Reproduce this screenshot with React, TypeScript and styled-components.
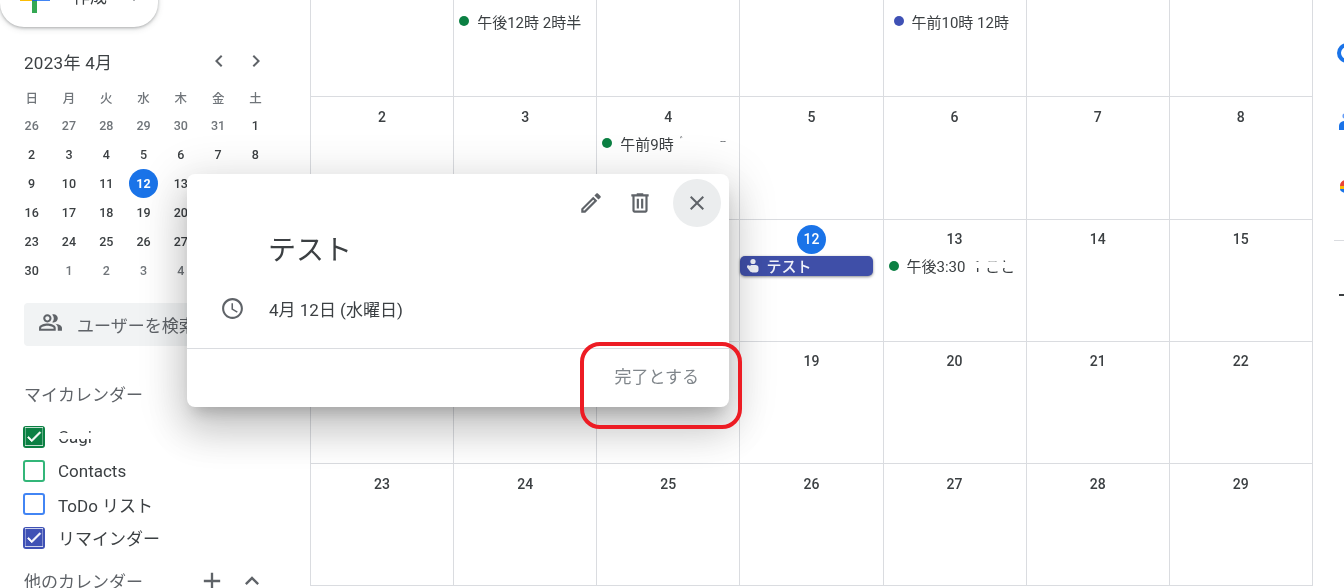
import React from 'react';
import styled, { createGlobalStyle } from 'styled-components';
import {
  MdAdd,
  MdChevronLeft,
  MdChevronRight,
  MdClose,
  MdExpandLess,
  MdOutlineAccessTime,
  MdOutlineEdit,
  MdOutlinePeopleAlt,
  MdCheck,
} from 'react-icons/md';

const GlobalStyle = createGlobalStyle`
  html, body {
    margin: 0;
    padding: 0;
    height: 588px;
    overflow: hidden;
    background: #fff;
    font-family: Roboto, "Noto Sans CJK JP", sans-serif;
    color: #3c4043;
  }
`;

const Page = styled.div`
  position: relative;
  display: flex;
  width: 1344px;
  height: 588px;
  overflow: hidden;
  background: #fff;
  filter: blur(0.3px);
`;

const Sidebar = styled.aside`
  flex: 0 0 310px;
  display: flex;
  flex-direction: column;
  align-items: flex-start;
  > * {
    flex-shrink: 0;
  }
`;

const Compose = styled.div`
  display: flex;
  align-items: center;
  box-sizing: border-box;
  width: 158px;
  height: 48px;
  margin-top: -21px;
  padding-left: 16px;
  border-radius: 0 0 24px 24px;
  background: #fff;
  box-shadow: 0 1px 3px rgba(60, 64, 67, 0.35), 0 2px 6px rgba(60, 64, 67, 0.15);
  font-size: 17px;
  color: #3c4043;
`;

const ComposeLabel = styled.span`
  margin-left: 21px;
  position: relative;
  top: -8px;
`;

const ComposeCaret = styled.span`
  width: 0;
  height: 0;
  margin: 0 0 0 23px;
  position: relative;
  top: -4px;
  border-left: 4px solid transparent;
  border-right: 4px solid transparent;
  border-top: 4px solid #5f6368;
`;

const MiniHeader = styled.div`
  display: flex;
  align-items: center;
  box-sizing: border-box;
  width: 100%;
  height: 24px;
  margin-top: 22px;
  padding: 0 42px 0 24px;
  font-size: 17px;
  letter-spacing: 0.3px;
  color: #3c4043;
`;

const MiniTitle = styled.span`
  flex: 1;
`;

const MiniNav = styled.div`
  display: flex;
  gap: 13px;
  font-size: 24px;
  color: #5f6368;
  svg {
    display: block;
  }
`;

const MiniGrid = styled.div`
  display: grid;
  grid-template-columns: repeat(7, 37.3px);
  grid-template-rows: 27px repeat(6, 29px);
  margin: 11px 0 0 13px;
`;

const MiniDay = styled.div<{ $muted?: boolean; $head?: boolean; $today?: boolean }>`
  display: flex;
  align-items: center;
  justify-content: center;
  font-size: 12.5px;
  font-weight: ${(p) => (p.$today ? 700 : 500)};
  color: ${(p) => (p.$today ? '#fff' : p.$head || p.$muted ? '#70757a' : '#3c4043')};
  span {
    display: flex;
    align-items: center;
    justify-content: center;
    width: 29px;
    height: 29px;
    border-radius: 50%;
    background: ${(p) => (p.$today ? '#1a73e8' : 'transparent')};
  }
`;

const Search = styled.div`
  display: flex;
  align-items: center;
  box-sizing: border-box;
  width: 262px;
  height: 43px;
  margin: 18px 0 0 24px;
  padding-left: 14px;
  border-radius: 4px;
  background: #f1f3f4;
  font-size: 17px;
  color: #5f6368;
  white-space: nowrap;
  svg {
    font-size: 25px;
    margin-right: 14px;
    position: relative;
    top: -2px;
  }
`;

const SectionHead = styled.div<{ $gap: number }>`
  display: flex;
  align-items: center;
  box-sizing: border-box;
  width: 100%;
  height: 24px;
  margin-top: ${(p) => p.$gap}px;
  padding: 0 44px 0 24px;
  font-size: 17px;
  color: #5f6368;
`;

const SectionTitle = styled.span`
  flex: 1;
`;

const SectionTools = styled.div`
  display: flex;
  gap: 12px;
  color: #5f6368;
  font-size: 28px;
  svg {
    display: block;
  }
`;

const CalendarList = styled.div`
  display: flex;
  flex-direction: column;
  margin-top: 15px;
`;

const CalendarRow = styled.div`
  display: flex;
  align-items: center;
  height: 33.7px;
  padding-left: 23px;
  font-size: 17px;
  color: #3c4043;
`;

const Check = styled.span<{ $color: string; $on?: boolean }>`
  display: flex;
  align-items: center;
  justify-content: center;
  box-sizing: border-box;
  width: 22px;
  height: 22px;
  margin-right: 13px;
  border: 2px solid ${(p) => p.$color};
  border-radius: 3px;
  background: ${(p) => (p.$on ? p.$color : '#fff')};
  color: #fff;
  font-size: 21px;
  svg {
    stroke: #fff;
    stroke-width: 1px;
  }
`;

const Fragmented = styled.span`
  -webkit-mask-image: linear-gradient(#000 0 32%, transparent 32% 62%, #000 62% 100%);
  mask-image: linear-gradient(#000 0 32%, transparent 32% 62%, #000 62% 100%);
`;

const Month = styled.main`
  flex: 0 0 auto;
  display: grid;
  grid-template-columns: repeat(7, 143.14px);
  grid-template-rows: repeat(5, 122.25px);
  height: 611px;
  margin-top: -25px;
  border-right: 1px solid #dadce0;
`;

const Cell = styled.div`
  display: flex;
  flex-direction: column;
  min-width: 0;
  border-left: 1px solid #dadce0;
  border-bottom: 1px solid #dadce0;
  background: #fff;
`;

const DateLabel = styled.div<{ $today?: boolean; $top?: boolean }>`
  display: flex;
  align-items: center;
  justify-content: center;
  align-self: center;
  width: ${(p) => (p.$today ? '29px' : 'auto')};
  height: 29px;
  margin-top: ${(p) => (p.$top ? '2px' : '5px')};
  margin-bottom: ${(p) => (p.$top ? '3px' : '0')};
  border-radius: 50%;
  background: ${(p) => (p.$today ? '#1a73e8' : 'transparent')};
  color: ${(p) => (p.$today ? '#fff' : '#3c4043')};
  font-size: 14px;
  font-weight: 500;
`;

const DotEvent = styled.div<{ $indent?: number }>`
  display: flex;
  align-items: center;
  height: 20px;
  margin-top: 2px;
  padding-left: ${(p) => 5 + (p.$indent ?? 0)}px;
  font-size: 15px;
  color: #3c4043;
  white-space: nowrap;
`;

const Dot = styled.span<{ $color: string }>`
  flex: 0 0 auto;
  width: 10px;
  height: 10px;
  margin-right: 8px;
  border-radius: 50%;
  background: ${(p) => p.$color};
`;

const Patch = styled.span`
  display: flex;
  align-items: flex-start;
  justify-content: space-between;
  box-sizing: border-box;
  width: 57px;
  height: 19px;
  margin-left: 5px;
  padding: 0 10px 0 1px;
  background: #fff;
  font-size: 10px;
  line-height: 16px;
  color: #5f6368;
`;

const Chip = styled.div`
  display: flex;
  align-items: center;
  height: 20px;
  margin: 2px 10px 0 0;
  padding-left: 5px;
  border-radius: 5px;
  background: #3f4fa8;
  box-shadow: 0 1px 3px rgba(60, 64, 67, 0.6);
  color: #f1f3f9;
  font-size: 15px;
  font-weight: 500;
  svg {
    margin-right: 6px;
  }
`;

const Rail = styled.aside`
  flex: 1;
  display: flex;
  flex-direction: column;
  min-width: 0;
  overflow: hidden;
  padding-top: 43px;
`;

const RailIcon = styled.svg<{ $gap: number }>`
  display: block;
  flex: 0 0 auto;
  margin: ${(p) => p.$gap}px 0 0 24px;
`;

const RailLine = styled.div`
  flex: 0 0 auto;
  height: 1px;
  margin: 45px 0 0 21px;
  background: #dadce0;
`;

const RailPlus = styled.div`
  flex: 0 0 auto;
  width: 12px;
  height: 2px;
  margin: 53px 0 0 26px;
  background: #3c4043;
`;

const Popup = styled.section`
  position: absolute;
  left: 187px;
  top: 174px;
  display: flex;
  flex-direction: column;
  width: 542px;
  height: 233px;
  border-radius: 8px;
  background: #fff;
  box-shadow: 0 24px 38px 3px rgba(0, 0, 0, 0.14), 0 9px 46px 8px rgba(0, 0, 0, 0.12),
    0 11px 15px -7px rgba(0, 0, 0, 0.2);
  > * {
    flex-shrink: 0;
  }
`;

const PopupTools = styled.div`
  display: flex;
  align-items: center;
  justify-content: flex-end;
  padding: 5px 8px 0 0;
`;

const ToolButton = styled.div<{ $active?: boolean }>`
  display: flex;
  align-items: center;
  justify-content: center;
  width: 48px;
  height: 48px;
  margin-left: ${(p) => (p.$active ? '9px' : '1px')};
  border-radius: 50%;
  background: ${(p) => (p.$active ? '#ebedee' : 'transparent')};
  color: #5f6368;
  font-size: ${(p) => (p.$active ? '24px' : '26px')};
`;

const PopupTitle = styled.h2`
  margin: 6px 0 0 81px;
  font-size: 28px;
  line-height: 36px;
  font-weight: 400;
  color: #3c4043;
`;

const PopupRow = styled.div`
  display: flex;
  align-items: center;
  height: 24px;
  margin-top: 27px;
  padding-left: 33px;
  font-size: 17px;
  color: #3c4043;
  svg {
    font-size: 25px;
    margin-right: 24px;
    color: #5f6368;
  }
`;

const PopupFooter = styled.div`
  display: flex;
  align-items: center;
  justify-content: flex-end;
  flex: 1 0 auto;
  margin-top: 28px;
  padding: 0 30px 5px 0;
  border-top: 1px solid #dadce0;
  font-size: 17px;
  color: #80868b;
`;

const Highlight = styled.div`
  position: absolute;
  left: 580px;
  top: 342px;
  box-sizing: border-box;
  width: 162px;
  height: 87px;
  border: 4px solid #ed1c24;
  border-radius: 20px;
`;

const miniRows = [
  [26, 27, 28, 29, 30, 31, 1],
  [2, 3, 4, 5, 6, 7, 8],
  [9, 10, 11, 12, 13, 14, 15],
  [16, 17, 18, 19, 20, 21, 22],
  [23, 24, 25, 26, 27, 28, 29],
  [30, 1, 2, 3, 4, 5, 6],
];

const monthCells = [
  '26', '27', '28', '29', '30', '31', '4月 1日',
  '2', '3', '4', '5', '6', '7', '8',
  '9', '10', '11', '12', '13', '14', '15',
  '16', '17', '18', '19', '20', '21', '22',
  '23', '24', '25', '26', '27', '28', '29',
];

const GREEN = '#0b8043';
const INDIGO = '#3f51b5';

function DeleteIcon() {
  return (
    <svg width="26" height="26" viewBox="0 0 24 24" fill="currentColor">
      <path d="M15 4V3H9v1H4v2h1v13c0 1.1.9 2 2 2h10c1.1 0 2-.9 2-2V6h1V4h-5zm2 15H7V6h10v13z" />
      <path d="M9 8h2v9H9zm4 0h2v9h-2z" />
    </svg>
  );
}

function PlusLogo() {
  return (
    <svg width="36" height="36" viewBox="0 0 36 36">
      <path fill="#34a853" d="M16 16h5v12h-5z" />
      <path fill="#4285f4" d="M21 11h13v5H21z" />
      <path fill="#fbbc05" d="M4 11h12v5H4z" />
      <path fill="#ea4335" d="M16 2h5v9h-5z" />
      <path fill="#1967d2" d="M16 11h5v5h-5z" />
    </svg>
  );
}

function ReminderHand() {
  return (
    <svg width="15" height="15" viewBox="0 0 15 15" fill="currentColor">
      <circle cx="8" cy="3.5" r="2.6" />
      <path d="M2 8.5c0-1 1-1.4 2-1l1.5.6V7h5c1.8 0 3 1 3 2.8V12c0 1.4-1 2.4-2.4 2.4H7.2c-1 0-1.6-.4-2.2-1.2L2.3 9.8C2.1 9.4 2 9 2 8.5z" />
    </svg>
  );
}

function cellContent(index: number) {
  if (index === 1) {
    return (
      <DotEvent>
        <Dot $color={GREEN} />午後12時 2時半
      </DotEvent>
    );
  }
  if (index === 4) {
    return (
      <DotEvent $indent={5}>
        <Dot $color={INDIGO} />午前10時 12時
      </DotEvent>
    );
  }
  if (index === 9) {
    return (
      <DotEvent>
        <Dot $color={GREEN} />午前9時
        <Patch>
          <span>ﾞ</span>
          <span>--</span>
        </Patch>
      </DotEvent>
    );
  }
  if (index === 17) {
    return (
      <Chip>
        <ReminderHand />テスト
      </Chip>
    );
  }
  if (index === 18) {
    return (
      <DotEvent>
        <Dot $color={GREEN} />午後3:30&nbsp;&nbsp;<Fragmented>1 こと</Fragmented>
      </DotEvent>
    );
  }
  return null;
}

export default function App() {
  return (
    <Page>
      <GlobalStyle />
      <Sidebar>
        <Compose>
          <PlusLogo />
          <ComposeLabel>作成</ComposeLabel>
          <ComposeCaret />
        </Compose>
        <MiniHeader>
          <MiniTitle>2023年 4月</MiniTitle>
          <MiniNav>
            <MdChevronLeft />
            <MdChevronRight />
          </MiniNav>
        </MiniHeader>
        <MiniGrid>
          {['日', '月', '火', '水', '木', '金', '土'].map((d) => (
            <MiniDay key={d} $head>
              {d}
            </MiniDay>
          ))}
          {miniRows.map((row, r) =>
            row.map((d, c) => (
              <MiniDay
                key={`${r}-${c}`}
                $muted={(r === 0 && d > 20) || (r === 5 && d < 10)}
                $today={r === 2 && d === 12}
              >
                <span>{d}</span>
              </MiniDay>
            )),
          )}
        </MiniGrid>
        <Search>
          <MdOutlinePeopleAlt />
          ユーザーを検索
        </Search>
        <SectionHead $gap={35}>
          <SectionTitle>マイカレンダー</SectionTitle>
        </SectionHead>
        <CalendarList>
          <CalendarRow>
            <Check $color={GREEN} $on>
              <MdCheck />
            </Check>
            <Fragmented>Cagi</Fragmented>
          </CalendarRow>
          <CalendarRow>
            <Check $color="#33b679" />
            Contacts
          </CalendarRow>
          <CalendarRow>
            <Check $color="#4285f4" />
            ToDo リスト
          </CalendarRow>
          <CalendarRow>
            <Check $color={INDIGO} $on>
              <MdCheck />
            </Check>
            リマインダー
          </CalendarRow>
        </CalendarList>
        <SectionHead $gap={14}>
          <SectionTitle>他のカレンダー</SectionTitle>
          <SectionTools>
            <MdAdd />
            <MdExpandLess />
          </SectionTools>
        </SectionHead>
      </Sidebar>

      <Month>
        {monthCells.map((label, i) => (
          <Cell key={i}>
            <DateLabel $today={i === 17} $top={i < 7}>
              {label}
            </DateLabel>
            {cellContent(i)}
          </Cell>
        ))}
      </Month>

      <Rail>
        <RailIcon $gap={0} width="20" height="20" viewBox="0 0 20 20">
          <circle cx="10" cy="10" r="8" fill="none" stroke="#1a73e8" strokeWidth="4" />
        </RailIcon>
        <RailIcon $gap={49} width="20" height="20" viewBox="0 0 20 20">
          <circle cx="8" cy="4" r="2.6" fill="#669df6" />
          <path fill="#1a73e8" d="M2 18v-4c0-3 3-5 6-5s6 2 6 5v4z" />
        </RailIcon>
        <RailIcon $gap={43} width="20" height="20" viewBox="0 0 20 20">
          <path fill="#ea4335" d="M9 5c-3 0-6 2-6 6h12c0-3-3-6-6-6z" />
          <path fill="#fbbc05" d="M3 11h12v3H3z" />
          <path fill="#1a73e8" d="M9 18c-3 0-6-2-6-4h12c0 2-3 4-6 4z" />
        </RailIcon>
        <RailLine />
        <RailPlus />
      </Rail>

      <Popup>
        <PopupTools>
          <ToolButton>
            <MdOutlineEdit />
          </ToolButton>
          <ToolButton>
            <DeleteIcon />
          </ToolButton>
          <ToolButton $active>
            <MdClose />
          </ToolButton>
        </PopupTools>
        <PopupTitle>テスト</PopupTitle>
        <PopupRow>
          <MdOutlineAccessTime />
          4月 12日 (水曜日)
        </PopupRow>
        <PopupFooter>完了とする</PopupFooter>
      </Popup>
      <Highlight />
    </Page>
  );
}
